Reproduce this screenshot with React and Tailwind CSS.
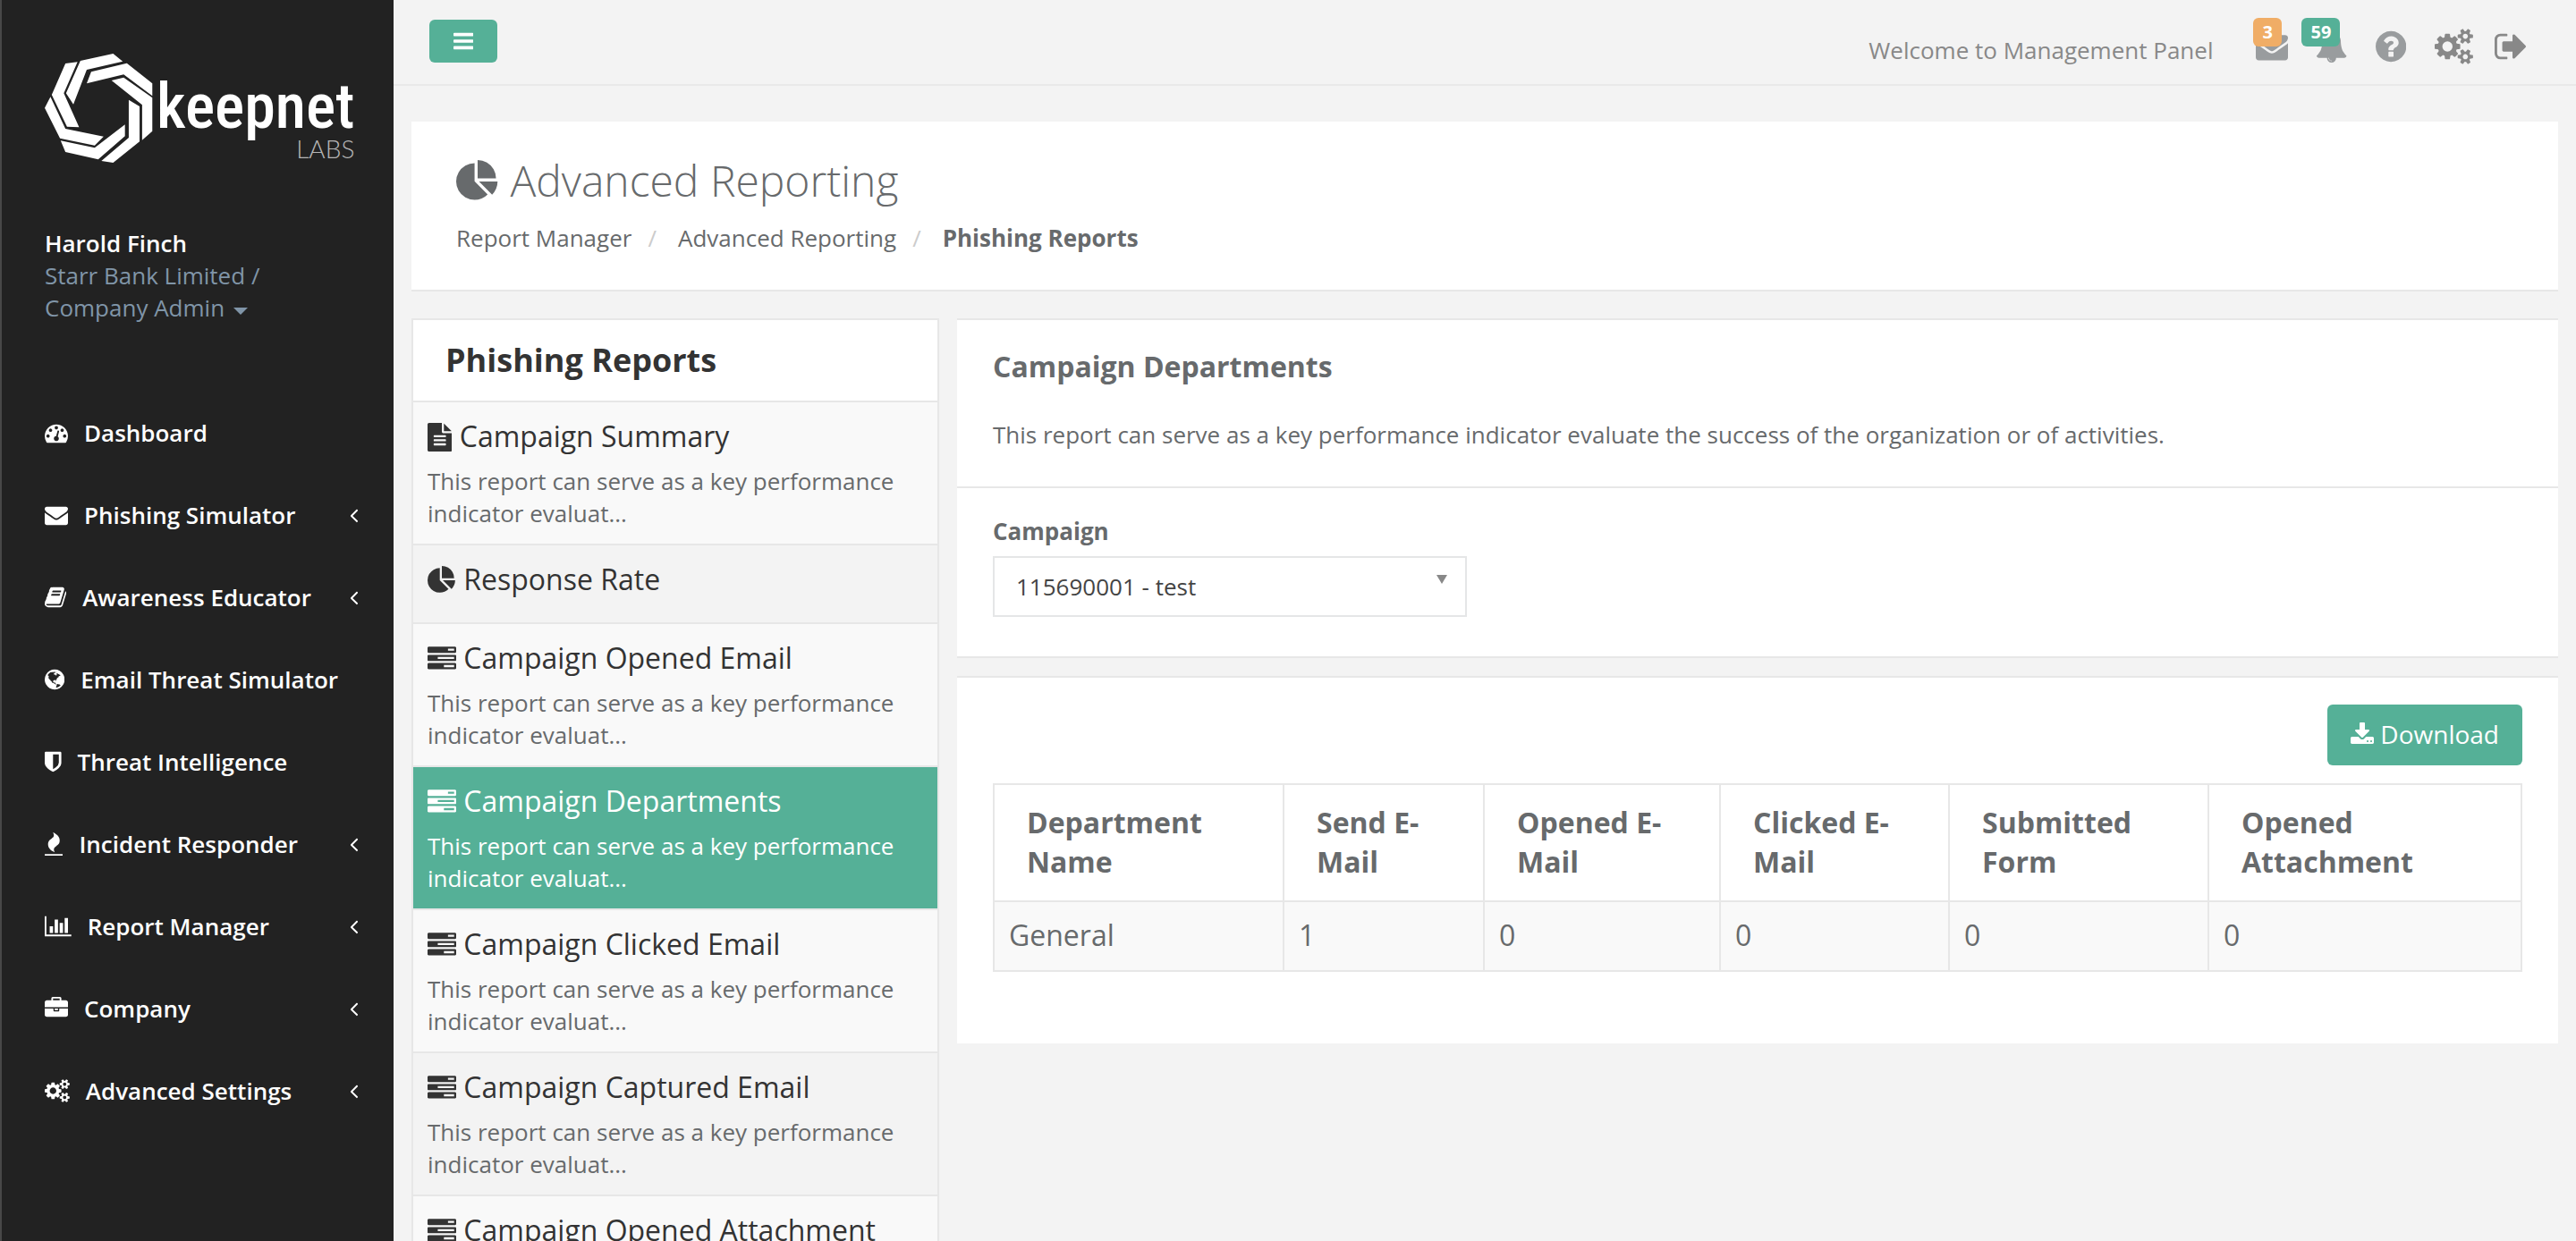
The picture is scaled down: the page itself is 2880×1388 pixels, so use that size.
import React from "react";

/* Icon outlines on a 1792-unit em; x and w give each glyph's own advance. */
const ICONS = {
  bars: { x: 128, w: 1536, d: "M1664 1344v128q0 26-19 45t-45 19h-1408q-26 0-45-19t-19-45v-128q0-26 19-45t45-19h1408q26 0 45 19t19 45zm0-512v128q0 26-19 45t-45 19h-1408q-26 0-45-19t-19-45v-128q0-26 19-45t45-19h1408q26 0 45 19t19 45zm0-512v128q0 26-19 45t-45 19h-1408q-26 0-45-19t-19-45v-128q0-26 19-45t45-19h1408q26 0 45 19t19 45z" },
  envelope: { x: 0, w: 1792, d: "M1792 710v794q0 66-47 113t-113 47h-1472q-66 0-113-47t-47-113v-794q44 49 101 87 362 246 497 345 57 42 92.5 65.5t94.5 48 110 24.5h2q51 0 110-24.5t94.5-48 92.5-65.5q170-123 498-345 57-39 100-87zm0-294q0 79-49 151t-122 123q-376 261-468 325-10 7-42.5 31t-54 38.5-52 32.5-57.5 27-50 9h-2q-23 0-50-9t-57.5-27-52-32.5-54-38.5-42.5-31q-91-64-262-182.5t-205-142.5q-62-42-117-115.5t-55-136.5q0-78 41.5-130t118.5-52h1472q65 0 112.5 47t47.5 113z" },
  gauge: { x: 0, w: 1792, d: "M384 1152q0-53-37.5-90.5t-90.5-37.5-90.5 37.5-37.5 90.5 37.5 90.5 90.5 37.5 90.5-37.5 37.5-90.5zm192-448q0-53-37.5-90.5t-90.5-37.5-90.5 37.5-37.5 90.5 37.5 90.5 90.5 37.5 90.5-37.5 37.5-90.5zm428 481l101-382q6-26-7.5-48.5t-38.5-29.5-48 6.5-30 39.5l-101 382q-60 5-107 43.5t-63 98.5q-20 77 20 146t117 89 146-20 89-117q16-60-6-117t-72-91zm660-33q0-53-37.5-90.5t-90.5-37.5-90.5 37.5-37.5 90.5 37.5 90.5 90.5 37.5 90.5-37.5 37.5-90.5zm-640-640q0-53-37.5-90.5t-90.5-37.5-90.5 37.5-37.5 90.5 37.5 90.5 90.5 37.5 90.5-37.5 37.5-90.5zm448 192q0-53-37.5-90.5t-90.5-37.5-90.5 37.5-37.5 90.5 37.5 90.5 90.5 37.5 90.5-37.5 37.5-90.5zm320 448q0 261-141 483-19 29-54 29h-1402q-35 0-54-29-141-221-141-483 0-182 71-348t191-286 286-191 348-71 348 71 286 191 191 286 71 348z" },
  book: { x: 64, w: 1664, d: "M1703 478q40 57 18 129l-275 906q-19 64-76.5 107.5t-122.5 43.5h-923q-77 0-148.5-53.5t-99.5-131.5q-24-67-2-127 0-4 3-27t4-37q1-8-3-21.5t-3-19.5q2-11 8-21t16.5-23.5 16.5-23.5q23-38 45-91.5t30-91.5q3-10 .5-30t-.5-28q3-11 17-28t17-23q21-36 42-92t25-90q1-9-2.5-32t.5-28q4-13 22-30.5t22-22.5q19-26 42.5-84.5t27.5-96.5q1-8-3-25.5t-2-26.5q2-8 9-18t18-23 17-21q8-12 16.5-30.5t15-35 16-36 19.5-32 26.5-23.5 36-11.5 47.5 5.5l-1 3q38-9 51-9h761q74 0 114 56t18 130l-274 906q-36 119-71.5 153.5t-128.5 34.5h-869q-27 0-38 15-11 16-1 43 24 70 144 70h923q29 0 56-15.5t35-41.5l300-987q7-22 5-57 38 15 59 43zm-1064 2q-4 13 2 22.5t20 9.5h608q13 0 25.5-9.5t16.5-22.5l21-64q4-13-2-22.5t-20-9.5h-608q-13 0-25.5 9.5t-16.5 22.5zm-83 256q-4 13 2 22.5t20 9.5h608q13 0 25.5-9.5t16.5-22.5l21-64q4-13-2-22.5t-20-9.5h-608q-13 0-25.5 9.5t-16.5 22.5z" },
  globe: { x: 128, w: 1536, d: "M896 128q209 0 385.5 103t279.5 279.5 103 385.5-103 385.5-279.5 279.5-385.5 103-385.5-103-279.5-279.5-103-385.5 103-385.5 279.5-279.5 385.5-103zm274 521q-2 1-9.5 9.5t-13.5 9.5q2 0 4.5-5t5-11 3.5-7q6-7 22-15 14-6 52-12 34-8 51 11-2-2 9.5-13t14.5-12q3-2 15-4.5t15-7.5l2-22q-12 1-17.5-7t-6.5-21q0 2-6 8 0-7-4.5-8t-11.5 1-9 1q-10-3-15-7.5t-8-16.5-4-15q-2-5-9.5-10.5t-9.5-10.5q-1-2-2.5-5.5t-3-6.5-4-5.5-5.5-2.5-7 5-7.5 10-4.5 5q-3-2-6-1.5t-4.5 1-4.5 3-5 3.5q-3 2-8.5 3t-8.5 2q15-5-1-11-10-4-16-3 9-4 7.5-12t-8.5-14h5q-1-4-8.5-8.5t-17.5-8.5-13-6q-8-5-34-9.5t-33-.5q-5 6-4.5 10.5t4 14 3.5 12.5q1 6-5.5 13t-6.5 12q0 7 14 15.5t10 21.5q-3 8-16 16t-16 12q-5 8-1.5 18.5t10.5 16.5q2 2 1.5 4t-3.5 4.5-5.5 4-6.5 3.5l-3 2q-11 5-20.5-6t-13.5-26q-7-25-16-30-23-8-29 1-5-13-41-26-25-9-58-4 6-1 0-15-7-15-19-12 3-6 4-17.5t1-13.5q3-13 12-23 1-1 7-8.5t9.5-13.5.5-6q35 4 50-11 5-5 11.5-17t10.5-17q9-6 14-5.5t14.5 5.5 14.5 5q14 1 15.5-11t-7.5-20q12 1 3-17-4-7-8-9-12-4-27 5-8 4 2 8-1-1-9.5 10.5t-16.5 17.5-16-5q-1-1-5.5-13.5t-9.5-13.5q-8 0-16 15 3-8-11-15t-24-8q19-12-8-27-7-4-20.5-5t-19.5 4q-5 7-5.5 11.5t5 8 10.5 5.5 11.5 4 8.5 3q14 10 8 14-2 1-8.5 3.5t-11.5 4.5-6 4q-3 4 0 14t-2 14q-5-5-9-17.5t-7-16.5q7 9-25 6l-10-1q-4 0-16 2t-20.5 1-13.5-8q-4-8 0-20 1-4 4-2-4-3-11-9.5t-10-8.5q-46 15-94 41 6 1 12-1 5-2 13-6.5t10-5.5q34-14 42-7l5-5q14 16 20 25-7-4-30-1-20 6-22 12 7 12 5 18-4-3-11.5-10t-14.5-11-15-5q-16 0-22 1-146 80-235 222 7 7 12 8 4 1 5 9t2.5 11 11.5-3q9 8 3 19 1-1 44 27 19 17 21 21 3 11-10 18-1-2-9-9t-9-4q-3 5 .5 18.5t10.5 12.5q-7 0-9.5 16t-2.5 35.5-1 23.5l2 1q-3 12 5.5 34.5t21.5 19.5q-13 3 20 43 6 8 8 9 3 2 12 7.5t15 10 10 10.5q4 5 10 22.5t14 23.5q-2 6 9.5 20t10.5 23q-1 0-2.5 1t-2.5 1q3 7 15.5 14t15.5 13q1 3 2 10t3 11 8 2q2-20-24-62-15-25-17-29-3-5-5.5-15.5t-4.5-14.5q2 0 6 1.5t8.5 3.5 7.5 4 2 3q-3 7 2 17.5t12 18.5 17 19 12 13q6 6 14 19.5t0 13.5q9 0 20 10.5t17 19.5q5 8 8 26t5 24q2 7 8.5 13.5t12.5 9.5l16 8 13 7q5 2 18.5 10.5t21.5 11.5q10 4 16 4t14.5-2.5 13.5-3.5q15-2 29 15t21 21q36 19 55 11-2 1 .5 7.5t8 15.5 9 14.5 5.5 8.5q5 6 18 15t18 15q6-4 7-9-3 8 7 20t18 10q14-3 14-32-31 15-49-18 0-1-2.5-5.5t-4-8.5-2.5-8.5 0-7.5 5-3q9 0 10-3.5t-2-12.5-4-13q-1-8-11-20t-12-15q-5 9-16 8t-16-9q0 1-1.5 5.5t-1.5 6.5q-13 0-15-1 1-3 2.5-17.5t3.5-22.5q1-4 5.5-12t7.5-14.5 4-12.5-4.5-9.5-17.5-2.5q-19 1-26 20-1 3-3 10.5t-5 11.5-9 7q-7 3-24 2t-24-5q-13-8-22.5-29t-9.5-37q0-10 2.5-26.5t3-25-5.5-24.5q3-2 9-9.5t10-10.5q2-1 4.5-1.5t4.5 0 4-1.5 3-6q-1-1-4-3-3-3-4-3 7 3 28.5-1.5t27.5 1.5q15 11 22-2 0-1-2.5-9.5t-.5-13.5q5 27 29 9 3 3 15.5 5t17.5 5q3 2 7 5.5t5.5 4.5 5-.5 8.5-6.5q10 14 12 24 11 40 19 44 7 3 11 2t4.5-9.5 0-14-1.5-12.5l-1-8v-18l-1-8q-15-3-18.5-12t1.5-18.5 15-18.5q1-1 8-3.5t15.5-6.5 12.5-8q21-19 15-35 7 0 11-9-1 0-5-3t-7.5-5-4.5-2q9-5 2-16 5-3 7.5-11t7.5-10q9 12 21 2 7-8 1-16 5-7 20.5-10.5t18.5-9.5q7 2 8-2t1-12 3-12q4-5 15-9t13-5l17-11q3-4 0-4 18 2 31-11 10-11-6-20 3-6-3-9.5t-15-5.5q3-1 11.5-.5t10.5-1.5q15-10-7-16-17-5-43 12zm-163 877q206-36 351-189-3-3-12.5-4.5t-12.5-3.5q-18-7-24-8 1-7-2.5-13t-8-9-12.5-8-11-7q-2-2-7-6t-7-5.5-7.5-4.5-8.5-2-10 1l-3 1q-3 1-5.5 2.5t-5.5 3-4 3 0 2.5q-21-17-36-22-5-1-11-5.5t-10.5-7-10-1.5-11.5 7q-5 5-6 15t-2 13q-7-5 0-17.5t2-18.5q-3-6-10.5-4.5t-12 4.5-11.5 8.5-9 6.5-8.5 5.5-8.5 7.5q-3 4-6 12t-5 11q-2-4-11.5-6.5t-9.5-5.5q2 10 4 35t5 38q7 31-12 48-27 25-29 40-4 22 12 26 0 7-8 20.5t-7 21.5q0 6 2 16z" },
  shield: { x: 256, w: 1280, d: "M1344 960v-640h-448v1137q119-63 213-137 235-184 235-360zm192-768v768q0 86-33.5 170.5t-83 150-118 127.5-126.5 103-121 77.5-89.5 49.5-42.5 20q-12 6-26 6t-26-6q-16-7-42.5-20t-89.5-49.5-121-77.5-126.5-103-118-127.5-83-150-33.5-170.5v-768q0-26 19-45t45-19h1152q26 0 45 19t19 45z" },
  fire: { x: 192, w: 1408, d: "M1600 1696v64q0 13-9.5 22.5t-22.5 9.5h-1344q-13 0-22.5-9.5t-9.5-22.5v-64q0-13 9.5-22.5t22.5-9.5h1344q13 0 22.5 9.5t9.5 22.5zm-256-1056q0 78-24.5 144t-64 112.5-87.5 88-96 77.5-87.5 72-64 81.5-24.5 96.5q0 96 67 224l-4-1 1 1q-90-41-160-83t-138.5-100-113.5-122.5-72.5-150.5-27.5-184q0-78 24.5-144t64-112.5 87.5-88 96-77.5 87.5-72 64-81.5 24.5-96.5q0-94-66-224l3 1-1-1q90 41 160 83t138.5 100 113.5 122.5 72.5 150.5 27.5 184z" },
  chart: { x: 0, w: 2048, d: "M640 896v512h-256v-512h256zm384-512v1024h-256v-1024h256zm1024 1152v128h-2048v-1536h128v1408h1920zm-640-896v768h-256v-768h256zm384-384v1152h-256v-1152h256z" },
  briefcase: { x: 0, w: 1792, d: "M640 256h512v-128h-512v128zm1152 640v480q0 66-47 113t-113 47h-1472q-66 0-113-47t-47-113v-480h672v160q0 26 19 45t45 19h320q26 0 45-19t19-45v-160h672zm-768 0v128h-256v-128h256zm768-480v384h-1792v-384q0-66 47-113t113-47h352v-160q0-40 28-68t68-28h576q40 0 68 28t28 68v160h352q66 0 113 47t47 113z" },
  cogs: { x: -64, w: 1920, d: "M832 896q0-106-75-181t-181-75-181 75-75 181 75 181 181 75 181-75 75-181zm768 512q0-52-38-90t-90-38-90 38-38 90q0 53 37.5 90.5t90.5 37.5 90.5-37.5 37.5-90.5zm0-1024q0-52-38-90t-90-38-90 38-38 90q0 53 37.5 90.5t90.5 37.5 90.5-37.5 37.5-90.5zm-384 421v185q0 10-7 19.5t-16 10.5l-155 24q-11 35-32 76 34 48 90 115 7 11 7 20 0 12-7 19-23 30-82.5 89.5t-78.5 59.5q-11 0-21-7l-115-90q-37 19-77 31-11 108-23 155-7 24-30 24h-186q-11 0-20-7.5t-10-17.5l-23-153q-34-10-75-31l-118 89q-7 7-20 7-11 0-21-8-144-133-144-160 0-9 7-19 10-14 41-53t47-61q-23-44-35-82l-152-24q-10-1-17-9.5t-7-19.5v-185q0-10 7-19.5t16-10.5l155-24q11-35 32-76-34-48-90-115-7-11-7-20 0-12 7-20 22-30 82-89t79-59q11 0 21 7l115 90q34-18 77-32 11-108 23-154 7-24 30-24h186q11 0 20 7.5t10 17.5l23 153q34 10 75 31l118-89q8-7 20-7 11 0 21 8 144 133 144 160 0 8-7 19-12 16-42 54t-45 60q23 48 34 82l152 23q10 2 17 10.5t7 19.5zm640 533v140q0 16-149 31-12 27-30 52 51 113 51 138 0 4-4 7-122 71-124 71-8 0-46-47t-52-68q-20 2-30 2t-30-2q-14 21-52 68t-46 47q-2 0-124-71-4-3-4-7 0-25 51-138-18-25-30-52-149-15-149-31v-140q0-16 149-31 13-29 30-52-51-113-51-138 0-4 4-7 4-2 35-20t59-34 30-16q8 0 46 46.5t52 67.5q20-2 30-2t30 2q51-71 92-112l6-2q4 0 124 70 4 3 4 7 0 25-51 138 17 23 30 52 149 15 149 31zm0-1024v140q0 16-149 31-12 27-30 52 51 113 51 138 0 4-4 7-122 71-124 71-8 0-46-47t-52-68q-20 2-30 2t-30-2q-14 21-52 68t-46 47q-2 0-124-71-4-3-4-7 0-25 51-138-18-25-30-52-149-15-149-31v-140q0-16 149-31 13-29 30-52-51-113-51-138 0-4 4-7 4-2 35-20t59-34 30-16q8 0 46 46.5t52 67.5q20-2 30-2t30 2q51-71 92-112l6-2q4 0 124 70 4 3 4 7 0 25-51 138 17 23 30 52 149 15 149 31z" },
  question: { x: 128, w: 1536, d: "M1024 1376v-192q0-14-9-23t-23-9h-192q-14 0-23 9t-9 23v192q0 14 9 23t23 9h192q14 0 23-9t9-23zm256-672q0-88-55.5-163t-138.5-116-170-41q-243 0-371 213-15 24 8 42l132 100q7 6 19 6 16 0 25-12 53-68 86-92 34-24 86-24 48 0 85.5 26t37.5 59q0 38-20 61t-68 45q-63 28-115.5 86.5t-52.5 125.5v36q0 14 9 23t23 9h192q14 0 23-9t9-23q0-19 21.5-49.5t54.5-49.5q32-18 49-28.5t46-35 44.5-48 28-60.5 12.5-81zm384 192q0 209-103 385.5t-279.5 279.5-385.5 103-385.5-103-279.5-279.5-103-385.5 103-385.5 279.5-279.5 385.5-103 385.5 103 279.5 279.5 103 385.5z" },
  signOut: { x: 64, w: 1568, d: "M704 1440q0 4 1 20t.5 26.5-3 23.5-10 19.5-20.5 6.5h-320q-119 0-203.5-84.5t-84.5-203.5v-704q0-119 84.5-203.5t203.5-84.5h320q13 0 22.5 9.5t9.5 22.5q0 4 1 20t.5 26.5-3 23.5-10 19.5-20.5 6.5h-320q-66 0-113 47t-47 113v704q0 66 47 113t113 47h312l11.5 1 11.5 3 8 5.5 7 9 2 13.5zm928-544q0 26-19 45l-544 544q-19 19-45 19t-45-19-19-45v-288h-448q-26 0-45-19t-19-45v-384q0-26 19-45t45-19h448v-288q0-26 19-45t45-19 45 19l544 544q19 19 19 45z" },
  bell: { x: 64, w: 1664, d: "M912 1696q0-16-16-16-59 0-101.5-42.5t-42.5-101.5q0-16-16-16t-16 16q0 73 51.5 124.5t124.5 51.5q16 0 16-16zm816-288q0 52-38 90t-90 38h-448q0 106-75 181t-181 75-181-75-75-181h-448q-52 0-90-38t-38-90q50-42 91-88t85-119.5 74.5-158.5 50-206 19.5-260q0-152 117-282.5t307-158.5q-8-19-8-39 0-40 28-68t68-28 68 28 28 68q0 20-8 39 190 28 307 158.5t117 282.5q0 139 19.5 260t50 206 74.5 158.5 85 119.5 91 88z" },
  pie: { x: 0, w: 1792, d: "M768 890l546 546q-106 108-247.5 168t-298.5 60q-209 0-385.5-103t-279.5-279.5-103-385.5 103-385.5 279.5-279.5 385.5-103v762zm187 6h773q0 157-60 298.5t-168 247.5zm709-128h-768v-768q209 0 385.5 103t279.5 279.5 103 385.5z" },
  file: { x: 128, w: 1536, d: "M1596 476q14 14 28 36h-472v-472q22 14 36 28zm-476 164h544v1056q0 40-28 68t-68 28h-1344q-40 0-68-28t-28-68v-1600q0-40 28-68t68-28h800v544q0 40 28 68t68 28zm160 736v-64q0-14-9-23t-23-9h-704q-14 0-23 9t-9 23v64q0 14 9 23t23 9h704q14 0 23-9t9-23zm0-256v-64q0-14-9-23t-23-9h-704q-14 0-23 9t-9 23v64q0 14 9 23t23 9h704q14 0 23-9t9-23zm0-256v-64q0-14-9-23t-23-9h-704q-14 0-23 9t-9 23v64q0 14 9 23t23 9h704q14 0 23-9t9-23z" },
  tasks: { x: 0, w: 1792, d: "M1024 1408h640v-128h-640v128zm-384-512h1024v-128h-1024v128zm640-512h384v-128h-384v128zm512 832v256q0 26-19 45t-45 19h-1664q-26 0-45-19t-19-45v-256q0-26 19-45t45-19h1664q26 0 45 19t19 45zm0-512v256q0 26-19 45t-45 19h-1664q-26 0-45-19t-19-45v-256q0-26 19-45t45-19h1664q26 0 45 19t19 45zm0-512v256q0 26-19 45t-45 19h-1664q-26 0-45-19t-19-45v-256q0-26 19-45t45-19h1664q26 0 45 19t19 45z" },
  download: { x: 64, w: 1664, d: "M1344 1344q0-26-19-45t-45-19-45 19-19 45 19 45 45 19 45-19 19-45zm256 0q0-26-19-45t-45-19-45 19-19 45 19 45 45 19 45-19 19-45zm128-224v320q0 40-28 68t-68 28h-1472q-40 0-68-28t-28-68v-320q0-40 28-68t68-28h465l135 136q58 56 136 56t136-56l136-136h464q40 0 68 28t28 68zm-325-569q17 41-14 70l-448 448q-18 19-45 19t-45-19l-448-448q-31-29-14-70 17-39 59-39h256v-448q0-26 19-45t45-19h256q26 0 45 19t19 45v448h256q42 0 59 39z" },
  angleLeft: { x: 640, w: 576, d: "M1203 544q0 13-10 23l-393 393 393 393q10 10 10 23t-10 23l-50 50q-10 10-23 10t-23-10l-466-466q-10-10-10-23t10-23l466-466q10-10 23-10t23 10l50 50q10 10 10 23z" },
};

function Icon({ name, className }) {
  const { x, w, d } = ICONS[name];
  return (
    <svg viewBox={`${x} 0 ${w} 1792`} fill="currentColor" aria-hidden="true" className={`inline-block w-auto shrink-0 ${className}`}>
      <path d={d} />
    </svg>
  );
}

const NAV = [
  { label: "Dashboard", icon: "gauge" },
  { label: "Phishing Simulator", icon: "envelope", sub: true },
  { label: "Awareness Educator", icon: "book", sub: true },
  { label: "Email Threat Simulator", icon: "globe" },
  { label: "Threat Intelligence", icon: "shield" },
  { label: "Incident Responder", icon: "fire", sub: true },
  { label: "Report Manager", icon: "chart", sub: true },
  { label: "Company", icon: "briefcase", sub: true },
  { label: "Advanced Settings", icon: "cogs", sub: true },
];

const SUMMARY = "This report can serve as a key performance indicator evaluat...";

const REPORTS = [
  { title: "Campaign Summary", icon: "file", text: SUMMARY },
  { title: "Response Rate", icon: "pie", shaded: true },
  { title: "Campaign Opened Email", icon: "tasks", text: SUMMARY },
  { title: "Campaign Departments", icon: "tasks", text: SUMMARY, active: true },
  { title: "Campaign Clicked Email", icon: "tasks", text: SUMMARY },
  { title: "Campaign Captured Email", icon: "tasks", text: SUMMARY, shaded: true },
  { title: "Campaign Opened Attachment", icon: "tasks" },
];

const COLUMNS = [
  { label: "Department Name", width: "w-[324px]" },
  { label: "Send E-Mail", width: "w-[224px]" },
  { label: "Opened E-Mail", width: "w-[264px]" },
  { label: "Clicked E-Mail", width: "w-[256px]" },
  { label: "Submitted Form", width: "w-[290px]" },
  { label: "Opened Attachment", width: "" },
];

const ROWS = [["General", "1", "0", "0", "0", "0"]];

function Logo() {
  return (
    <a href="#home" aria-label="keepnet LABS" className="flex h-[122px] items-start gap-1 text-white">
      <svg viewBox="140 180 340 366" preserveAspectRatio="none" fill="currentColor" aria-hidden="true" className="h-[122px] w-[121px] shrink-0">
        <path d="M205 213L243 208L200 313L248 427L210 425L162 318Z" />
        <path d="M252 204L355 180L385 206L272 234L230 350L207 313Z" />
        <path d="M272 280L286 241L398 212L478 280V322L388 250Z" />
        <path d="M350 270L388 260L478 328V440L446 470V352Z" />
        <path d="M404 335L438 357V475L355 546L318 540L404 462Z" />
        <path d="M392 418V457L308 535L205 510L190 472L297 496Z" />
        <path d="M158 325L205 432L325 458L297 488L188 464L140 362Z" />
      </svg>
      <span className="flex flex-col items-end pt-6">
        <span className="font-['Liberation_Sans_Narrow','Roboto_Condensed','Lato',sans-serif] text-[70px] leading-[70px] font-medium">keepnet</span>
        <span className="font-['Lato','Open_Sans',sans-serif] text-[28px] leading-[24px] font-light text-[#b5b5b5]">LABS</span>
      </span>
    </a>
  );
}

function Sidebar() {
  return (
    <aside className="flex w-[440px] shrink-0 flex-col border-l-2 border-[#484848] bg-[#222222] text-[26px] leading-9">
      <div className="px-12 pt-15">
        <Logo />
        <div className="pt-18">
          <p className="font-semibold text-white">Harold Finch</p>
          <a href="#account" className="block text-[#8095a8]">
            Starr Bank Limited /<br />
            Company Admin
            <svg viewBox="0 0 16 8" fill="currentColor" aria-hidden="true" className="ml-2.5 inline-block h-2 w-4 align-[2px]">
              <path d="M0 0H16L8 8Z" />
            </svg>
          </a>
        </div>
      </div>
      <nav className="pt-[76px]">
        <ul>
          {NAV.map((item) => (
            <li key={item.label}>
              <a href="#section" className="flex h-[92px] items-center gap-[18px] pr-10 pl-12 font-semibold text-white">
                <Icon name={item.icon} className="h-[26px]" />
                <span className="grow whitespace-nowrap">{item.label}</span>
                {item.sub && <Icon name="angleLeft" className="h-[26px]" />}
              </a>
            </li>
          ))}
        </ul>
      </nav>
    </aside>
  );
}

function TopBar() {
  return (
    <header className="flex h-24 items-start justify-between border-b-2 border-[#e9e9e9] pr-14 pl-10">
      <button type="button" aria-label="Toggle menu" className="mt-[22px] flex h-12 w-[76px] items-center justify-center rounded-md bg-[#55b097] text-white">
        <Icon name="bars" className="h-[26px]" />
      </button>
      <div className="flex h-[94px] items-center pt-2.5 text-[#999c9e]">
        <span className="mr-12 pt-2 text-[#888888]">Welcome to Management Panel</span>
        <div className="flex items-center gap-8">
          <a href="#messages" aria-label="Messages" className="relative flex">
            <Icon name="envelope" className="h-9" />
            <span className="absolute -top-[14px] -left-[3px] rounded-md bg-[#f0ad66] px-2.5 text-[20px] leading-8 font-bold text-white">3</span>
          </a>
          <a href="#alerts" aria-label="Alerts" className="relative flex">
            <Icon name="bell" className="h-9" />
            <span className="absolute -top-[14px] -left-[17px] rounded-md bg-[#55b097] px-2.5 text-[20px] leading-8 font-bold text-white">59</span>
          </a>
          <a href="#help" aria-label="Help" className="flex"><Icon name="question" className="h-10" /></a>
          <div className="flex items-center gap-6 text-[#888888]">
            <a href="#settings" aria-label="Settings" className="flex"><Icon name="cogs" className="h-10" /></a>
            <a href="#logout" aria-label="Log out" className="flex"><Icon name="signOut" className="h-10" /></a>
          </div>
        </div>
      </div>
    </header>
  );
}

function PageHeading() {
  return (
    <section className="mt-10 border-b-2 border-[#e7e7e7] bg-white px-[50px] py-10">
      <h1 className="text-[48px] leading-[52px] font-light">
        <Icon name="pie" className="h-12 align-[-7px]" /> Advanced Reporting
      </h1>
      <nav aria-label="Breadcrumb" className="pt-5">
        <ol className="flex">
          <li><a href="#report-manager">Report Manager</a></li>
          <li aria-hidden="true" className="pr-6 pl-4.5 text-[#cccccc]">/</li>
          <li><a href="#advanced-reporting">Advanced Reporting</a></li>
          <li aria-hidden="true" className="pr-6 pl-4.5 text-[#cccccc]">/</li>
          <li className="font-bold">Phishing Reports</li>
        </ol>
      </nav>
    </section>
  );
}

function ReportItem({ report }) {
  const surface = report.active ? "bg-[#55b097]" : report.shaded ? "bg-[#f3f3f3]" : "bg-[#f9f9f9]";
  return (
    <li className="border-t-2 border-[#e7e7e7]">
      <a href="#report" className={`block px-4 pt-5 pb-4 ${surface}`}>
        <h3 className={`mb-3.5 text-[32px] leading-9 whitespace-nowrap ${report.active ? "text-white" : "text-[#333333]"}`}>
          <Icon name={report.icon} className="h-8 align-[-5px]" /> {report.title}
        </h3>
        {report.text && <p className={report.active ? "text-white" : ""}>{report.text}</p>}
      </a>
    </li>
  );
}

function ReportList() {
  return (
    <section className="w-[590px] shrink-0 border-2 border-[#e7e7e7] bg-white">
      <h2 className="px-9 text-[36px] leading-[90px] font-bold text-[#333333]">Phishing Reports</h2>
      <ul>
        {REPORTS.map((report) => (
          <ReportItem key={report.title} report={report} />
        ))}
      </ul>
    </section>
  );
}

function CampaignFilter() {
  return (
    <section className="border-y-2 border-[#e7e7e7] bg-white">
      <div className="border-b-2 border-[#e7e7e7] px-10 pt-[30px] pb-10">
        <h2 className="text-[32px] leading-[44px] font-bold">Campaign Departments</h2>
        <p className="pt-9">This report can serve as a key performance indicator evaluate the success of the organization or of activities.</p>
      </div>
      <div className="px-10 pt-[30px] pb-11">
        <label htmlFor="campaign" className="block pb-2.5 font-bold">Campaign</label>
        <div className="relative w-[530px] max-w-full">
          <select id="campaign" className="block h-[68px] w-full appearance-none border-2 border-[#e5e6e7] bg-white px-6 text-[#444444]">
            <option>115690001 - test</option>
          </select>
          <svg viewBox="0 0 12 10" fill="#888888" aria-hidden="true" className="pointer-events-none absolute top-[21px] right-[22px] h-2.5 w-3">
            <path d="M0 0H12L6 10Z" />
          </svg>
        </div>
      </div>
    </section>
  );
}

function DepartmentTable() {
  return (
    <section className="mt-5 border-t-2 border-[#e7e7e7] bg-white px-10 pt-[30px] pb-20">
      <div className="flex justify-end pb-5">
        <button type="button" className="h-[68px] rounded-md bg-[#55b097] px-[26px] pb-0.5 text-[28px] leading-10 text-white">
          <Icon name="download" className="h-7 align-[-4px]" /> Download
        </button>
      </div>
      <table className="w-full table-fixed border-collapse border-2 border-[#e7e7e7] text-left text-[32px] leading-[44px]">
        <thead>
          <tr className="h-[131px]">
            {COLUMNS.map((column) => (
              <th key={column.label} scope="col" className={`border-x-2 border-[#e7e7e7] px-9 pb-0.5 font-bold ${column.width}`}>
                {column.label}
              </th>
            ))}
          </tr>
        </thead>
        <tbody>
          {ROWS.map((row) => (
            <tr key={row[0]} className="h-[78px] border-t-2 border-[#e7e7e7] bg-[#f9f9f9]">
              {row.map((value, i) => (
                <td key={COLUMNS[i].label} className="border-x-2 border-[#e7e7e7] px-4 pb-0.5">{value}</td>
              ))}
            </tr>
          ))}
        </tbody>
      </table>
    </section>
  );
}

export default function App() {
  return (
    <div className="flex h-screen overflow-hidden bg-[#f3f3f3] font-['Open_Sans',sans-serif] text-[26px] leading-9 text-[#676a6c]">
      <Sidebar />
      <div className="min-w-0 grow">
        <TopBar />
        <main className="px-5">
          <PageHeading />
          <div className="mt-[30px] flex items-start gap-5">
            <ReportList />
            <div className="min-w-0 grow">
              <CampaignFilter />
              <DepartmentTable />
            </div>
          </div>
        </main>
      </div>
    </div>
  );
}
